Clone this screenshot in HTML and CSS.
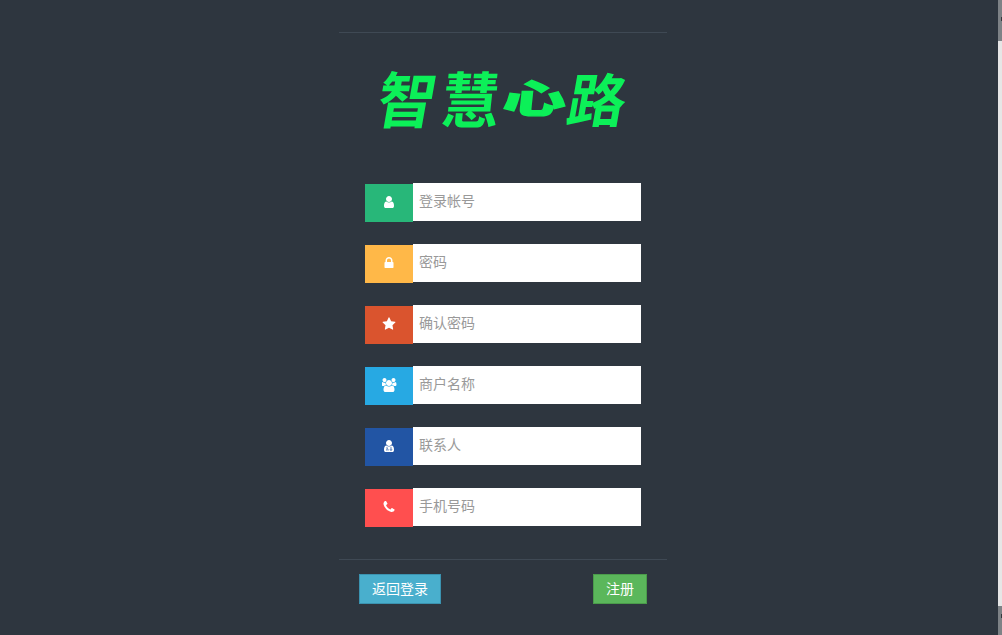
FILE: index.html
```html
<!DOCTYPE html>
<html lang="zh-CN">
<head>
  <meta charset="UTF-8">
  <title>智慧心路 - 注册</title>
  <link rel="stylesheet" href="styles.css">
</head>
<body>

  <main class="register">
    <header class="logo-box">
      <h1 class="logo"><span class="logo-zhi">智</span><span class="logo-hui">慧</span><span class="logo-xin">心</span><span class="logo-lu">路</span></h1>
    </header>

    <form class="fields">
      <div class="field">
        <span class="addon addon-green">
          <svg class="icon" viewBox="0 0 1792 1792"><path d="M1536 1399q0 109-62.5 187t-150.5 78h-854q-88 0-150.5-78t-62.5-187q0-85 8.5-160.5t31.5-152 58.5-131 94-89 134.5-34.5q131 128 313 128t313-128q76 0 134.5 34.5t94 89 58.5 131 31.5 152 8.5 160.5zm-256-887q0 159-112.5 271.5t-271.5 112.5-271.5-112.5-112.5-271.5 112.5-271.5 271.5-112.5 271.5 112.5 112.5 271.5z"/></svg>
        </span>
        <input type="text" placeholder="登录帐号">
      </div>
      <div class="field">
        <span class="addon addon-yellow">
          <svg class="icon" viewBox="0 0 1792 1792"><path d="M640 768h512v-192q0-106-75-181t-181-75-181 75-75 181v192zm832 96v576q0 40-28 68t-68 28h-960q-40 0-68-28t-28-68v-576q0-40 28-68t68-28h32v-192q0-184 132-316t316-132 316 132 132 316v192h32q40 0 68 28t28 68z"/></svg>
        </span>
        <input type="password" placeholder="密码">
      </div>
      <div class="field">
        <span class="addon addon-orange">
          <svg class="icon" viewBox="0 0 1792 1792"><path d="M1728 647q0 22-26 48l-363 354 86 500q1 7 1 20 0 21-10.5 35.5t-30.5 14.5q-19 0-40-12l-449-236-449 236q-22 12-40 12-21 0-31.5-14.5t-10.5-35.5q0-6 2-20l86-500-364-354q-25-27-25-48 0-37 56-46l502-73 225-455q19-41 49-41t49 41l225 455 502 73q56 9 56 46z"/></svg>
        </span>
        <input type="password" placeholder="确认密码">
      </div>
      <div class="field">
        <span class="addon addon-blue">
          <svg class="icon icon-wide" viewBox="0 0 1920 1792"><path d="M529 896q-162 5-265 128h-134q-82 0-138-40.5t-56-118.5q0-353 124-353 6 0 43.5 21t97.5 42.5 119 21.5q67 0 133-23-5 37-5 66 0 139 81 256zm1071 637q0 120-73 189.5t-194 69.5h-874q-121 0-194-69.5t-73-189.5q0-53 3.5-103.5t14-109 26.5-108.5 43-97.5 62-81 85.5-53.5 111.5-20q10 0 43 21.5t73 48 107 48 135 21.5 135-21.5 107-48 73-48 43-21.5q61 0 111.5 20t85.5 53.5 62 81 43 97.5 26.5 108.5 14 109 3.5 103.5zm-1024-1277q0 106-75 181t-181 75-181-75-75-181 75-181 181-75 181 75 75 181zm704 384q0 159-112.5 271.5t-271.5 112.5-271.5-112.5-112.5-271.5 112.5-271.5 271.5-112.5 271.5 112.5 112.5 271.5zm576 225q0 78-56 118.5t-138 40.5h-134q-103-123-265-128 81-117 81-256 0-29-5-66 66 23 133 23 59 0 119-21.5t97.5-42.5 43.5-21q124 0 124 353zm-128-609q0 106-75 181t-181 75-181-75-75-181 75-181 181-75 181 75 75 181z"/></svg>
        </span>
        <input type="text" placeholder="商户名称">
      </div>
      <div class="field">
        <span class="addon addon-navy">
          <svg class="icon" viewBox="0 0 1792 1792">
            <path d="M1536 1399q0 109-62.5 187t-150.5 78h-854q-88 0-150.5-78t-62.5-187q0-85 8.5-160.5t31.5-152 58.5-131 94-89 134.5-34.5q131 128 313 128t313-128q76 0 134.5 34.5t94 89 58.5 131 31.5 152 8.5 160.5zm-256-887q0 159-112.5 271.5t-271.5 112.5-271.5-112.5-112.5-271.5 112.5-271.5 271.5-112.5 271.5 112.5 112.5 271.5z"/>
            <path class="scope" d="M640 1010v250M600 1480v-120q0-110 90-110t90 110v120M1150 1010v240"/>
            <circle class="scope" cx="1150" cy="1370" r="100"/>
          </svg>
        </span>
        <input type="text" placeholder="联系人">
      </div>
      <div class="field">
        <span class="addon addon-red">
          <svg class="icon" viewBox="0 0 1792 1792"><path d="M1600 1240q0 27-10 70.5t-21 68.5q-21 50-122 106-94 51-186 51-27 0-53-3.5t-57.5-12.5-47-14.5-55.5-20.5-49-18q-98-35-175-83-127-79-264-216t-216-264q-48-77-83-175-3-9-18-49t-20.5-55.5-14.5-47-12.5-57.5-3.5-53q0-92 51-186 56-101 106-122 25-11 68.5-21t70.5-10q14 0 21 3 18 6 53 76 11 19 30 54t35 63.5 31 53.5q3 4 17.5 25t21.5 35.5 7 28.5q0 20-28.5 50t-62 55-62 53-28.5 46q0 9 5 22.5t8.5 20.5 14 24 11.5 19q76 137 174 235t235 174q2 1 19 11.5t24 14 20.5 8.5 22.5 5q18 0 46-28.5t53-62 55-62 50-28.5q14 0 28.5 7t35.5 21.5 25 17.5q25 15 53.5 31t63.5 35 54 30q70 35 76 53 3 7 3 21z"/></svg>
        </span>
        <input type="text" placeholder="手机号码">
      </div>
    </form>

    <footer class="actions">
      <button type="button" class="btn btn-info">返回登录</button>
      <button type="button" class="btn btn-success">注册</button>
    </footer>
  </main>

  <div class="scrollbar"><div class="scroll-thumb"></div></div>

</body>
</html>
```

FILE: styles.css
```css
* {
  box-sizing: border-box;
}

html, body {
  height: 100%;
}

body {
  margin: 0;
  background: #2e363f;
  font-family: "Liberation Sans", "Noto Sans CJK SC", sans-serif;
  font-size: 14px;
  overflow: hidden;
}

.register {
  width: 328px;
  margin-left: 339px;
  padding-top: 32px;
}

.logo-box {
  height: 151px;
  border-top: 1px solid #3f4954;
  padding-top: 26px;
}

.logo {
  display: flex;
  justify-content: center;
  gap: 5px;
  margin: 0;
  font-family: "Noto Sans CJK SC", sans-serif;
  font-size: 58px;
  font-weight: 700;
  line-height: 76px;
  color: #0cf058;
}

.logo span {
  display: block;
}

.logo-zhi { transform: skewX(-10deg) scaleY(1.05); }
.logo-hui { transform: skewX(-6deg) scaleY(1.05); }
.logo-xin {
  font-weight: 900;
  -webkit-text-stroke: 2px #0cf058;
  transform: skewX(-6deg) translateY(-1px) scale(1.08, 0.66);
}
.logo-lu { transform: skewX(-10deg); }

.fields {
  display: flex;
  flex-direction: column;
  gap: 22px;
  padding: 0 26px;
}

.field {
  display: flex;
  height: 39px;
}

.addon {
  display: flex;
  align-items: center;
  justify-content: center;
  width: 48px;
  height: 38px;
  margin-top: 1px;
  padding-bottom: 2px;
}

.addon-green { background: #28b779; }
.addon-yellow { background: #ffb848; }
.addon-orange { background: #da542e; }
.addon-blue { background: #27a9e3; }
.addon-navy { background: #2255a4; }
.addon-red { background: #ff4f4f; }

.icon {
  width: 14px;
  height: 14px;
  fill: #fff;
}

.icon-wide {
  width: 15px;
}

.scope {
  fill: none;
  stroke: #2255a4;
  stroke-width: 90;
}

.field input {
  width: 228px;
  height: 38px;
  padding: 0 6px 2px;
  border: none;
  border-radius: 0;
  outline: none;
  background: #fff;
  font-family: inherit;
  font-size: 14px;
  color: #555;
}

.field input::placeholder {
  color: #999;
  opacity: 1;
}

.actions {
  display: flex;
  justify-content: space-between;
  margin-top: 32px;
  padding: 14px 20px 0;
  border-top: 1px solid #3f4954;
}

.btn {
  height: 30px;
  padding: 0 12px 3px;
  border: 1px solid;
  border-radius: 0;
  font-family: inherit;
  font-size: 14px;
  color: #fff;
}

.btn-info {
  background: #49afcd;
  border-color: #3b93b0;
}

.btn-success {
  background: #5bb75b;
  border-color: #4b9c4b;
}

.scrollbar {
  position: absolute;
  top: 0;
  right: 0;
  width: 4px;
  height: 100%;
  padding: 41px 0 29px;
  background: #7d8286;
}

.scroll-thumb {
  height: 100%;
  background: #e6e6e6;
}

/* scroll arrows, only a sliver is visible at this width */
.scrollbar::before,
.scrollbar::after {
  content: "";
  position: absolute;
  right: 0;
  width: 1px;
  height: 4px;
  background: #33383d;
}

.scrollbar::before {
  top: 17px;
}

.scrollbar::after {
  bottom: 17px;
}
```
